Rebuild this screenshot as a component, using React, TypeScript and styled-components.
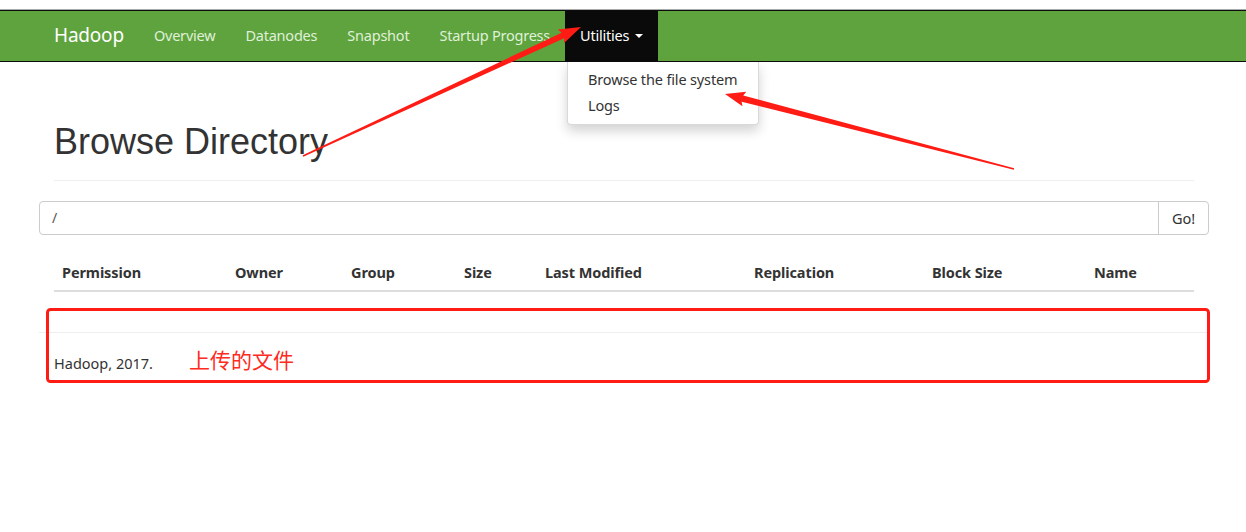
import React from "react";
import styled, { createGlobalStyle } from "styled-components";

const Global = createGlobalStyle`
  html, body { margin: 0; padding: 0; background: #fff; }
  body {
    font-family: "Noto Sans", "Open Sans", "Noto Sans CJK SC", sans-serif;
    font-size: 14px;
    color: #333;
  }
  * { box-sizing: border-box; }
`;

const Page = styled.div`
  position: relative;
  width: 1246px;
  height: 532px;
  padding-top: 9px;
  overflow: hidden;
`;

const TopRule = styled.div`
  height: 1px;
  background: #a9a9a9;
`;

const Navbar = styled.nav`
  height: 52px;
  background: #5fa33e;
  border-top: 1px solid #0c0c0c;
  border-bottom: 1px solid #0c0c0c;
  display: flex;
  align-items: stretch;
  padding-left: 39px;
`;

const Brand = styled.div`
  padding: 0 15px 3px;
  display: flex;
  align-items: center;
  font-size: 19px;
  color: #fff;
  letter-spacing: -0.2px;
`;

const NavItem = styled.div<{ $active?: boolean }>`
  padding: 0 15px 3px;
  display: flex;
  align-items: center;
  gap: 6px;
  font-size: 14.5px;
  color: ${(p) => (p.$active ? "#fff" : "#dff0d8")};
  background: ${(p) => (p.$active ? "#0a0a0a" : "transparent")};
  letter-spacing: -0.22px;
`;

const Caret = styled.span`
  width: 0;
  height: 0;
  border-left: 4px solid transparent;
  border-right: 4px solid transparent;
  border-top: 4px solid currentColor;
  margin-top: 2px;
`;

const Dropdown = styled.ul`
  position: absolute;
  top: 62px;
  left: 567px;
  width: 192px;
  margin: 0;
  padding: 4px 0 6px;
  list-style: none;
  background: #fff;
  border: 1px solid rgba(0, 0, 0, 0.15);
  border-top: none;
  border-radius: 0 0 4px 4px;
  box-shadow: 0 6px 12px rgba(0, 0, 0, 0.175);
  z-index: 5;
`;

const DropItem = styled.li`
  padding: 3px 20px;
  line-height: 20px;
  font-size: 14.5px;
  color: #333;
  letter-spacing: -0.15px;
`;

const Container = styled.div`
  width: 1170px;
  margin-left: 39px;
  padding: 0 15px;
`;

const PageHeader = styled.div`
  display: flow-root;
  margin: 40px 0 20px;
  padding-bottom: 8px;
  border-bottom: 1px solid #eee;
`;

const Title = styled.h1`
  margin: 20px 0 10px;
  font-family: "Liberation Sans", Arial, sans-serif;
  font-weight: 400;
  font-size: 36px;
  line-height: 40px;
  color: #333;
`;

const InputGroup = styled.div`
  margin: 0 -15px;
  display: flex;
  height: 34px;
  border: 1px solid #ccc;
  border-radius: 4px;
`;

const PathInput = styled.div`
  flex: 1;
  padding: 6px 12px;
  font-size: 14px;
  line-height: 20px;
  color: #555;
`;

const GoButton = styled.div`
  width: 50px;
  border-left: 1px solid #ccc;
  display: flex;
  align-items: center;
  justify-content: center;
  font-size: 14.5px;
  color: #333;
`;

const Table = styled.div`
  margin-top: 19px;
  margin-bottom: 40px;
`;

const HeadRow = styled.div`
  display: grid;
  grid-template-columns: 173px 116px 113px 81px 209px 178px 162px 1fr;
  border-bottom: 2px solid #ddd;
`;

const HeadCell = styled.div`
  padding: 8px;
  line-height: 20px;
  font-weight: 700;
  font-size: 14.5px;
  color: #333;
  letter-spacing: -0.1px;
`;

const Rule = styled.hr`
  margin: 20px -15px;
  border: 0;
  border-top: 1px solid #eee;
`;

const Footer = styled.p`
  margin: 0;
  line-height: 20px;
  font-size: 14.5px;
  color: #333;
`;

const Overlay = styled.svg`
  position: absolute;
  left: 0;
  top: 0;
  pointer-events: none;
  z-index: 10;
`;

const Note = styled.span`
  position: absolute;
  left: 189px;
  top: 345px;
  font-family: "Noto Sans CJK SC", sans-serif;
  font-size: 21px;
  line-height: 28px;
  color: #ff2a22;
  z-index: 10;
`;

type Pt = [number, number];

function arrowPoints(tail: Pt, tip: Pt, tailW: number, neckW: number, headLen: number, headW: number) {
  const dx = tip[0] - tail[0];
  const dy = tip[1] - tail[1];
  const len = Math.hypot(dx, dy);
  const ux = dx / len;
  const uy = dy / len;
  const nx = -uy;
  const ny = ux;
  const neck: Pt = [tip[0] - ux * headLen, tip[1] - uy * headLen];
  const pts: Pt[] = [
    [tail[0] + (nx * tailW) / 2, tail[1] + (ny * tailW) / 2],
    [neck[0] + (nx * neckW) / 2, neck[1] + (ny * neckW) / 2],
    [neck[0] + ux * -2 + (nx * headW) / 2, neck[1] + uy * -2 + (ny * headW) / 2],
    tip,
    [neck[0] + ux * -2 - (nx * headW) / 2, neck[1] + uy * -2 - (ny * headW) / 2],
    [neck[0] - (nx * neckW) / 2, neck[1] - (ny * neckW) / 2],
    [tail[0] - (nx * tailW) / 2, tail[1] - (ny * tailW) / 2],
  ];
  return pts.map((p) => p.join(",")).join(" ");
}

const columns = ["Permission", "Owner", "Group", "Size", "Last Modified", "Replication", "Block Size", "Name"];
const navItems = ["Overview", "Datanodes", "Snapshot", "Startup Progress"];

export default function App() {
  return (
    <>
      <Global />
      <Page>
        <TopRule />
        <Navbar>
          <Brand>Hadoop</Brand>
          {navItems.map((n) => (
            <NavItem key={n}>{n}</NavItem>
          ))}
          <NavItem $active>
            Utilities <Caret />
          </NavItem>
        </Navbar>
        <Dropdown>
          <DropItem>Browse the file system</DropItem>
          <DropItem>Logs</DropItem>
        </Dropdown>
        <Container>
          <PageHeader>
            <Title>Browse Directory</Title>
          </PageHeader>
          <InputGroup>
            <PathInput>/</PathInput>
            <GoButton>Go!</GoButton>
          </InputGroup>
          <Table>
            <HeadRow>
              {columns.map((c) => (
                <HeadCell key={c}>{c}</HeadCell>
              ))}
            </HeadRow>
          </Table>
          <Rule />
          <Footer>Hadoop, 2017.</Footer>
        </Container>
        <Note>上传的文件</Note>
        <Overlay width={1246} height={532} viewBox="0 0 1246 532">
          <rect x={47.5} y={309.5} width={1161} height={72} rx={3} fill="none" stroke="#ff1c14" strokeWidth={3} />
          <polygon points={arrowPoints([303, 156], [581, 27], 1.5, 6, 20, 15)} fill="#ff1c14" />
          <polygon points={arrowPoints([1014, 169], [725, 94], 1.5, 6.5, 18, 15)} fill="#ff1c14" />
        </Overlay>
      </Page>
    </>
  );
}
